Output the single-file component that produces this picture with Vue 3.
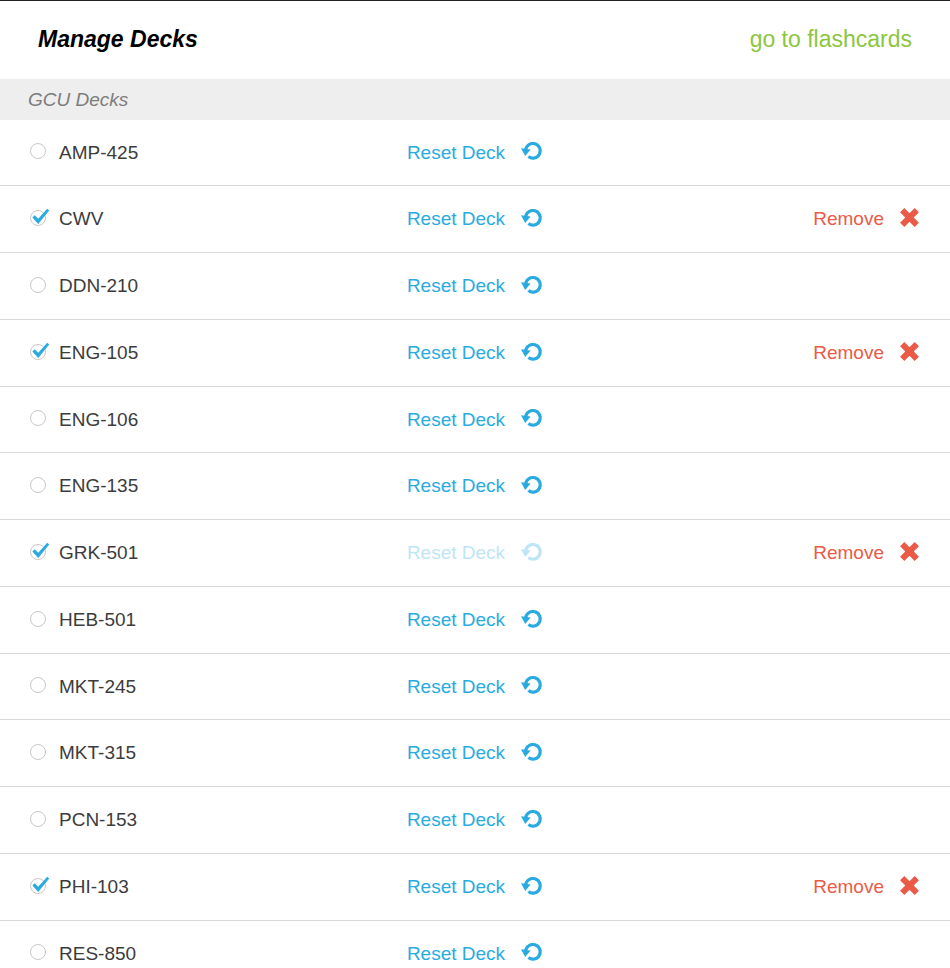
<template>
  <div class="manage-decks">
    <header class="header">
      <h1>Manage Decks</h1>
      <a href="#" class="flashcards-link" @click.prevent>go to flashcards</a>
    </header>

    <h2 class="group-title">GCU Decks</h2>

    <ul class="deck-list">
      <li v-for="deck in decks" :key="deck.name" class="deck">
        <label class="deck-name">
          <span class="tick">
            <input v-model="deck.selected" type="checkbox" />
            <svg v-if="deck.selected" class="tick-mark" viewBox="0 0 20 18" aria-hidden="true">
              <path d="M2.4 9.6 L4.8 7.2 L8.2 10.8 L17.2 0.8 L19.2 2.6 L8.2 16 Z" fill="#29abe2" />
            </svg>
          </span>
          <span>{{ deck.name }}</span>
        </label>

        <button class="action reset" type="button" :disabled="deck.fresh" @click="deck.fresh = true">
          <span>Reset Deck</span>
          <svg class="reset-icon" viewBox="0 0 21 18" aria-hidden="true">
            <path d="M4.6 8 A7.3 7.3 0 1 1 7.4 14.6" fill="none" stroke="currentColor" stroke-width="3.2" />
            <path d="M0 6.2 L9.6 7.6 L4.2 14 Z" fill="currentColor" />
          </svg>
        </button>

        <button v-if="deck.selected" class="action remove" type="button" @click="deck.selected = false">
          <span>Remove</span>
          <svg class="remove-icon" viewBox="0 0 19 19" aria-hidden="true">
            <path d="M2.2 2.2 L16.8 16.8 M16.8 2.2 L2.2 16.8" stroke="currentColor" stroke-width="6" />
          </svg>
        </button>
      </li>
    </ul>
  </div>
</template>

<script setup>
import { ref } from 'vue'

const decks = ref([
  { name: 'AMP-425', selected: false, fresh: false },
  { name: 'CWV', selected: true, fresh: false },
  { name: 'DDN-210', selected: false, fresh: false },
  { name: 'ENG-105', selected: true, fresh: false },
  { name: 'ENG-106', selected: false, fresh: false },
  { name: 'ENG-135', selected: false, fresh: false },
  { name: 'GRK-501', selected: true, fresh: true },
  { name: 'HEB-501', selected: false, fresh: false },
  { name: 'MKT-245', selected: false, fresh: false },
  { name: 'MKT-315', selected: false, fresh: false },
  { name: 'PCN-153', selected: false, fresh: false },
  { name: 'PHI-103', selected: true, fresh: false },
  { name: 'RES-850', selected: false, fresh: false }
])
</script>

<style>
body { margin: 0; background: #fff; }
html { scrollbar-width: none; }
</style>

<style scoped>
.manage-decks {
  border-top: 1px solid #222;
  font-family: "Liberation Sans", Arial, sans-serif;
  font-size: 19px;
  color: #3c3c3c;
}

.header {
  display: flex;
  align-items: center;
  justify-content: space-between;
  padding: 24px 38px 26px;
  line-height: 28px;
}

h1 { margin: 0; font-size: 23px; font-style: italic; color: #000; }
.flashcards-link { font-size: 23px; color: #8cc63f; text-decoration: none; }

.group-title {
  margin: 0;
  padding: 0 28px;
  background: #eee;
  color: #7d7d7d;
  font-size: 19px;
  font-weight: normal;
  font-style: italic;
  line-height: 41px;
}

.deck-list { list-style: none; margin: 0; padding: 0; }

.deck {
  display: grid;
  grid-template-columns: 1fr auto 1fr;
  align-items: center;
  box-sizing: border-box;
  height: 67px;
  padding: 0 31px 0 30px;
  border-bottom: 1px solid #d9d9d9;
}
.deck:nth-child(4n + 1) { height: 66px; }

.deck-name {
  display: flex;
  align-items: center;
  justify-self: start;
  gap: 13px;
  cursor: pointer;
}

.tick { position: relative; height: 16px; margin-bottom: 3px; }
.tick input {
  display: block;
  appearance: none;
  width: 16px;
  height: 16px;
  margin: 0;
  border: 1px solid #c8c8c8;
  border-radius: 50%;
  cursor: pointer;
}
.tick-mark {
  position: absolute;
  top: -2px;
  left: 0;
  width: 20px;
  height: 18px;
  pointer-events: none;
}

.action {
  display: flex;
  align-items: center;
  gap: 16px;
  padding: 0;
  border: none;
  background: none;
  font: inherit;
  cursor: pointer;
}
.action svg { margin-bottom: 3px; }
.reset { color: #29abe2; }
.reset:disabled { opacity: 0.3; cursor: default; }
.remove { justify-self: end; color: #eb5a46; }
.reset-icon { width: 21px; height: 18px; }
.remove-icon { width: 19px; height: 19px; }
</style>
